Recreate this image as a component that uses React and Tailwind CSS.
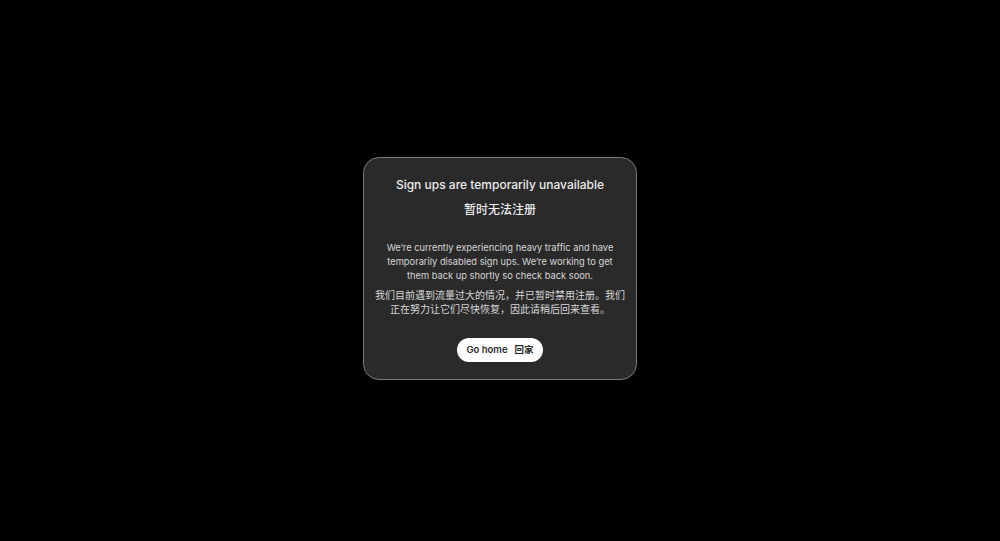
export default function App() {
  const font = { fontFamily: 'Inter, "Noto Sans CJK SC", sans-serif' };
  return (
    <div className="h-[541px] w-full bg-black flex items-center justify-center" style={font}>
      <div className="mb-[4px] w-[274px] rounded-[16px] border border-[#7a7a7a] bg-[#2a2a2a] pt-[19px] pb-[17px] px-[11px] flex flex-col items-center text-center">
        <div className="text-[12px] leading-[16px] font-medium text-[#ececec]">
          Sign ups are temporarily unavailable
        </div>
        <div className="mt-[9px] text-[12px] leading-[16px] font-medium text-[#ececec]">
          暂时无法注册
        </div>
        <p className="mt-[23px] w-[240px] text-[9.3px] leading-[14px] text-[#d6d6d6]">
          We’re currently experiencing heavy traffic and have temporarily disabled sign ups. We’re working to get them back up shortly so check back soon.
        </p>
        <p className="mt-[5px] w-[250px] text-[10px] leading-[14px] text-[#d6d6d6]">
          我们目前遇到流量过大的情况，并已暂时禁用注册。我们正在努力让它们尽快恢复，因此请稍后回来查看。
        </p>
        <button className="mt-[22px] h-[24px] px-[9px] rounded-full bg-white text-[#2a2a2a] text-[9.5px] font-semibold flex items-center gap-[7px]">
          <span>Go home</span>
          <span>回家</span>
        </button>
      </div>
    </div>
  );
}
